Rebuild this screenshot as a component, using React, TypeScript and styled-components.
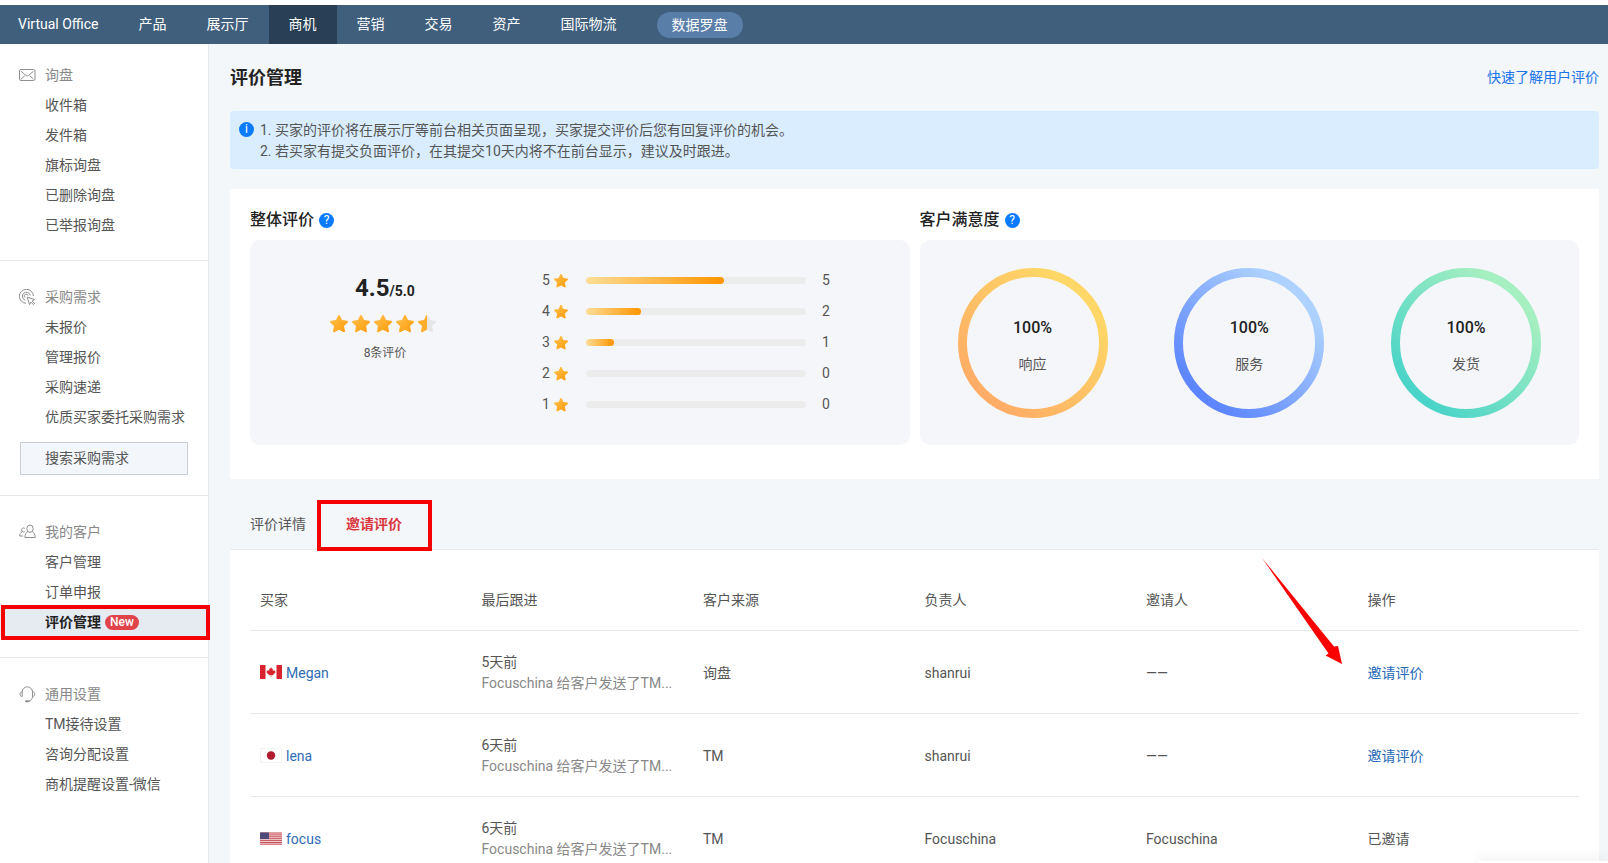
import React from 'react';
import styled, { createGlobalStyle, css } from 'styled-components';

const GlobalStyle = createGlobalStyle`
  *, *::before, *::after { box-sizing: border-box; }
  body {
    margin: 0;
    background: #fff;
    color: #555;
    font: 14px/21px Roboto, "Noto Sans CJK SC", sans-serif;
  }
  a { color: inherit; text-decoration: none; }
  button { font: inherit; color: inherit; border: 0; background: none; padding: 0; cursor: pointer; }
  h1, h2, p, ol, ul { margin: 0; padding: 0; }
  ul, ol { list-style: none; }
  svg { display: block; flex: none; }
`;

const Shell = styled.div`
  height: 100vh;
  display: flex;
  flex-direction: column;
  overflow: hidden;
  padding-top: 5px;
`;

/* ---------- top navigation ---------- */

const TopNav = styled.nav`
  flex: none;
  display: flex;
  align-items: center;
  height: 39px;
  background: #405f7d;
  color: #fff;
`;

const NavItem = styled.a<{ $active?: boolean }>`
  padding: 0 20px;
  line-height: 39px;
  &:first-child { padding-left: 18px; }
  ${p => p.$active && css`background: #283f56;`}
`;

const NavPill = styled.a`
  margin-left: 20px;
  padding: 0 15px;
  line-height: 26px;
  border-radius: 13px;
  background: #597ea8;
`;

/* ---------- side bar ---------- */

const Body = styled.div`
  flex: 1;
  display: flex;
  min-height: 0;
`;

const Sidebar = styled.aside`
  flex: none;
  width: 209px;
  border-right: 1px solid #e4e9ee;
  background: #fff;
`;

const SideSection = styled.section`
  padding: 21px 0 20px;
  border-bottom: 1px solid #e5e8eb;
  &:first-child { padding-top: 16px; }
  &:last-child { border-bottom: 0; }
`;

const SideTitle = styled.h2`
  display: flex;
  align-items: center;
  gap: 9px;
  height: 30px;
  padding-left: 19px;
  font-size: 14px;
  font-weight: 400;
  color: #888;
`;

const SideLink = styled.a<{ $active?: boolean }>`
  position: relative;
  display: flex;
  align-items: center;
  gap: 4px;
  height: 30px;
  padding-left: 45px;
  color: #555;
  ${p => p.$active && css`
    background: #e6ebf1;
    color: #222;
    font-weight: 700;
  `}
`;

const SideMark = styled.span`
  position: absolute;
  inset: -2px -2px -3px 1px;
  border: 4px solid #f40000;
  z-index: 2;
`;

const NewBadge = styled.span`
  padding: 0 5px;
  border-radius: 8px;
  background: #e0434a;
  color: #fff;
  font-size: 12px;
  font-weight: 500;
  line-height: 15px;
`;

const SearchButton = styled.button`
  display: block;
  width: 168px;
  height: 33px;
  margin: 10px 0 0 20px;
  padding-left: 24px;
  border: 1px solid #c9ced6;
  background: #f3f7fb;
  text-align: left;
`;

/* ---------- main column ---------- */

const Main = styled.main`
  flex: 1;
  display: flex;
  flex-direction: column;
  min-width: 0;
  overflow: hidden;
  padding: 0 9px 0 21px;
  background: #f3f7fa;
`;

const PageHead = styled.header`
  flex: none;
  display: flex;
  align-items: center;
  justify-content: space-between;
  height: 67px;
`;

const PageTitle = styled.h1`
  color: #222;
  font-size: 18px;
  font-weight: 700;
  line-height: 24px;
`;

const HelpLink = styled.a`
  color: #1a73e8;
`;

const Notice = styled.div`
  flex: none;
  display: flex;
  gap: 6px;
  padding: 9px 9px 7px;
  border-radius: 4px;
  background: #d9edff;
`;

const RoundMark = styled.span`
  flex: none;
  width: 15px;
  height: 15px;
  margin-top: 2px;
  border-radius: 50%;
  background: #0a7bff;
  color: #fff;
  font-size: 12px;
  font-weight: 400;
  line-height: 15px;
  text-align: center;
`;

const Summary = styled.section`
  flex: none;
  display: grid;
  grid-template-columns: 1fr 1fr;
  gap: 10px;
  margin-top: 20px;
  padding: 20px 20px 34px;
  background: #fff;
`;

const PanelTitle = styled.h2`
  display: flex;
  align-items: center;
  gap: 5px;
  height: 20px;
  margin-bottom: 11px;
  color: #222;
  font-size: 16px;
  font-weight: 500;
`;

const Panel = styled.div`
  display: flex;
  align-items: center;
  height: 205px;
  border-radius: 10px;
  background: #f5f6fa;
`;

const Score = styled.div`
  flex: none;
  width: 270px;
  display: flex;
  flex-direction: column;
  align-items: center;
  padding-bottom: 50px;
`;

const ScoreValue = styled.p`
  color: #222;
  font-size: 14px;
  font-weight: 700;
  line-height: 30px;
`;

const ScoreBig = styled.span`
  font-size: 24px;
`;

const StarRow = styled.div`
  display: flex;
  gap: 4px;
  padding: 9px 4px 10px 0;
`;

const ScoreNote = styled.p`
  font-size: 12px;
  line-height: 20px;
`;

const Bars = styled.ul`
  display: grid;
  gap: 10px;
  padding-left: 22px;
`;

const BarRow = styled.li`
  display: flex;
  align-items: center;
`;

const BarLabel = styled.span`
  display: flex;
  align-items: center;
  gap: 4px;
  width: 44px;
`;

const Track = styled.span`
  width: 220px;
  height: 7px;
  margin-right: 16px;
  border-radius: 4px;
  background: #ececec;
  overflow: hidden;
`;

const Fill = styled.span`
  display: block;
  height: 7px;
  border-radius: 4px;
  background: linear-gradient(90deg, #ffdd95, #ff9500);
`;

const Rings = styled(Panel)`
  justify-content: space-between;
  padding: 0 38px;
`;

const RingBox = styled.div`
  position: relative;
  width: 150px;
  height: 150px;
  display: flex;
  flex-direction: column;
  align-items: center;
  justify-content: center;
  gap: 16px;
  padding-top: 6px;
`;

const RingArt = styled.svg`
  position: absolute;
  inset: 0;
`;

const RingValue = styled.span`
  color: #222;
  font-size: 16px;
  font-weight: 500;
`;

/* ---------- tabs and table ---------- */

const Tabs = styled.div`
  flex: none;
  display: flex;
  height: 71px;
  border-bottom: 1px solid #e6eaee;
`;

const Tab = styled.button<{ $active?: boolean }>`
  position: relative;
  display: flex;
  align-items: center;
  height: 70px;
  padding: 20px 20px 0;
  ${p => p.$active && css`
    color: #d9363e;
    font-weight: 700;
  `}
`;

const TabMark = styled.span`
  position: absolute;
  inset: 21px -10px -2px -9px;
  border: 4px solid #f40000;
  z-index: 2;
`;

const TableCard = styled.section`
  position: relative;
  flex: none;
  padding: 20px 20px 0;
  background: #fff;
`;

const Table = styled.table`
  width: 100%;
  table-layout: fixed;
  border-collapse: separate;
  border-spacing: 0;
`;

const HeadCell = styled.th`
  height: 61px;
  padding: 0 10px;
  border-bottom: 1px solid #e8e8e8;
  font-weight: 400;
  text-align: left;
`;

const Cell = styled.td`
  height: 83px;
  padding: 21px 10px 19px;
  border-bottom: 1px solid #e8e8e8;
`;

const Buyer = styled.a`
  display: flex;
  align-items: center;
  gap: 4px;
  color: #2f6cb5;
`;

const ActionButton = styled.button`
  color: #2468b8;
`;

const FollowUp = styled.p`
  white-space: nowrap;
  color: #888;
`;

const Arrow = styled.svg`
  position: absolute;
  top: 8px;
  right: 257px;
`;

const Dock = styled.div`
  position: fixed;
  right: 0;
  bottom: 0;
  width: 130px;
  height: 2px;
  border-top-left-radius: 4px;
  background: #fff;
  box-shadow: 0 0 12px rgba(0, 0, 0, 0.25);
`;

/* ---------- drawings ---------- */

const iconProps = { width: 17, height: 17, viewBox: '0 0 17 17', fill: 'none', stroke: '#8f8f8f', 'aria-hidden': true } as const;

const MailIcon = () => (
  <svg {...iconProps}>
    <rect x="0.5" y="2.5" width="15.5" height="11" rx="1.5" />
    <path d="M2 4.200 7 8.500Q8.200 9.500 9.500 8.500L14.500 4.200M2 12.200 5.800 8.800M14.500 12.200l-3.800-3.400" />
  </svg>
);

const TargetIcon = () => (
  <svg {...iconProps}>
    <path d="M7 14.300A7 7 0 1 1 14.400 7M6.200 11.100A4 4 0 1 1 11.300 6.400M6 8.600A1.900 1.900 0 1 1 9 6.600" />
    <path d="m8.300 8.200 7.200 2.300-2.400 1.500 2.500 2.400-1.200 1.200-2.500-2.500-1.400 2.500z" strokeLinejoin="round" />
  </svg>
);

const PeopleIcon = () => (
  <svg {...iconProps}>
    <ellipse cx="11" cy="4.700" rx="3.200" ry="3.700" />
    <path d="M8.800 7.600C7 8.600 5.900 10.300 5.900 13.500h10.300c0-3.200-1.100-4.900-2.900-5.900" />
    <path d="M5.800 4.300a2 2 0 1 0-.2 3.300M3 7.800C1.500 8.600.700 9.800.700 12h3.500" />
  </svg>
);

const HeadsetIcon = () => (
  <svg {...iconProps}>
    <path d="M3.200 10.500V6a5.100 5.100 0 0 1 10.300 0v4.500c0 2.300-1.500 4.300-4 4.800" />
    <path d="M3.200 5.800C1.600 6 1 6.800 1 8.200s.7 2.200 2.200 2.400M13.500 5.800c1.600.2 2.200 1 2.200 2.400s-.7 2.200-2.200 2.400" />
    <path d="M7 15.300h2.500" strokeWidth="2" strokeLinecap="round" />
  </svg>
);

const STAR = 'M10 1.200c.5 0 .8.300 1 .7l2 4.300 4.800.6c1 .2 1.300 1.200.6 1.900l-3.500 3.300.9 4.800c.2 1-.7 1.600-1.500 1.100L10 15.600l-4.300 2.300c-.8.5-1.700-.1-1.500-1.100l.9-4.800L1.600 8.700C.9 8 1.200 7 2.200 6.800L7 6.200l2-4.300c.2-.4.500-.7 1-.7Z';

const Star = ({ size, half }: { size: number; half?: boolean }) => (
  <svg width={size} height={size} viewBox="1.200 1.200 17.600 17.600" aria-hidden>
    <defs>
      <linearGradient id="starFill" x1="0" y1="0" x2="1" y2="1">
        <stop offset="0" stopColor="#ffc24d" />
        <stop offset="1" stopColor="#ff9a0a" />
      </linearGradient>
      <linearGradient id="starHalf">
        <stop offset="0.5" stopColor="#ffad2b" />
        <stop offset="0.5" stopColor="#e6e6e6" />
      </linearGradient>
    </defs>
    <path d={STAR} fill={half ? 'url(#starHalf)' : 'url(#starFill)'} />
  </svg>
);

const Flag = ({ country }: { country: string }) => (
  <svg width="22" height="16" viewBox="0 0 22 16" role="img" aria-label={country}>
    {country === 'Canada' && (
      <>
        <path d="M0 0h22v14H0z" fill="#fff" />
        <path d="M0 0h5.500v14H0zM16.500 0H22v14h-5.500z" fill="#d8232f" />
        <path d="m11 2 1 1.900 1-.5-.4 2.600L14 4.900l.3.900 1.200-.1-.5 1.300.6.400-2.400 2 .2.900-2.100-.3V12h-.6v-2l-2.100.3.200-.9-2.400-2L7 7l-.5-1.300 1.200.1.300-.9L9.400 6 9 3.400l1 .5z" fill="#d8232f" />
      </>
    )}
    {country === 'Japan' && (
      <>
        <path d="M.5.500h21v14H.5z" fill="#fff" stroke="#f3f3f3" />
        <circle cx="11" cy="7.500" r="4.200" fill="#b01c2e" />
      </>
    )}
    {country === 'United States' && (
      <>
        <path d="M0 1.500h22v12H0z" fill="#f4dcdc" />
        <path d="M0 2h22M0 3.900h22M0 5.800h22M0 7.700h22M0 9.600h22M0 11.500h22M0 13.200h22" stroke="#c8505a" />
        <path d="M0 1.500h9V8H0z" fill="#4b4a78" />
      </>
    )}
  </svg>
);

const Ring = ({ id, from, to, label }: { id: string; from: string; to: string; label: string }) => (
  <RingBox>
    <RingArt width="150" height="150" viewBox="0 0 150 150" aria-hidden>
      <defs>
        <linearGradient id={id} x1="0.2" y1="0.9" x2="0.85" y2="0.2">
          <stop offset="0" stopColor={from} />
          <stop offset="1" stopColor={to} />
        </linearGradient>
      </defs>
      <circle cx="75" cy="75" r="70.500" fill="none" stroke={`url(#${id})`} strokeWidth="9" />
    </RingArt>
    <RingValue>100%</RingValue>
    <span>{label}</span>
  </RingBox>
);

/* ---------- data ---------- */

const NAV = ['Virtual Office', '产品', '展示厅', '商机', '营销', '交易', '资产', '国际物流'];

const SECTIONS = [
  { title: '询盘', icon: <MailIcon />, links: ['收件箱', '发件箱', '旗标询盘', '已删除询盘', '已举报询盘'] },
  { title: '采购需求', icon: <TargetIcon />, links: ['未报价', '管理报价', '采购速递', '优质买家委托采购需求'], search: '搜索采购需求' },
  { title: '我的客户', icon: <PeopleIcon />, links: ['客户管理', '订单申报', '评价管理'] },
  { title: '通用设置', icon: <HeadsetIcon />, links: ['TM接待设置', '咨询分配设置', '商机提醒设置-微信'] },
];

const RATINGS = [
  { stars: 5, count: 5 },
  { stars: 4, count: 2 },
  { stars: 3, count: 1 },
  { stars: 2, count: 0 },
  { stars: 1, count: 0 },
];
const TOTAL = 8;

const COLUMNS = ['买家', '最后跟进', '客户来源', '负责人', '邀请人', '操作'];

const BUYERS = [
  { name: 'Megan', country: 'Canada', when: '5天前', source: '询盘', owner: 'shanrui', inviter: '', invited: false },
  { name: 'lena', country: 'Japan', when: '6天前', source: 'TM', owner: 'shanrui', inviter: '', invited: false },
  { name: 'focus', country: 'United States', when: '6天前', source: 'TM', owner: 'Focuschina', inviter: 'Focuschina', invited: true },
];

export default function App() {
  return (
    <Shell>
      <GlobalStyle />
      <TopNav>
        {NAV.map(item => (
          <NavItem key={item} href="#" $active={item === '商机'}>{item}</NavItem>
        ))}
        <NavPill href="#">数据罗盘</NavPill>
      </TopNav>

      <Body>
        <Sidebar>
          {SECTIONS.map(section => (
            <SideSection key={section.title}>
              <SideTitle>{section.icon}{section.title}</SideTitle>
              {section.links.map(link => {
                const active = link === '评价管理';
                return (
                  <SideLink key={link} href="#" $active={active}>
                    {link}
                    {active && <NewBadge>New</NewBadge>}
                    {active && <SideMark />}
                  </SideLink>
                );
              })}
              {section.search && <SearchButton>{section.search}</SearchButton>}
            </SideSection>
          ))}
        </Sidebar>

        <Main>
          <PageHead>
            <PageTitle>评价管理</PageTitle>
            <HelpLink href="#">快速了解用户评价</HelpLink>
          </PageHead>

          <Notice>
            <RoundMark>i</RoundMark>
            <div>
              <p>1. 买家的评价将在展示厅等前台相关页面呈现，买家提交评价后您有回复评价的机会。</p>
              <p>2. 若买家有提交负面评价，在其提交10天内将不在前台显示，建议及时跟进。</p>
            </div>
          </Notice>

          <Summary>
            <div>
              <PanelTitle>整体评价<RoundMark>?</RoundMark></PanelTitle>
              <Panel>
                <Score>
                  <ScoreValue><ScoreBig>4.5</ScoreBig>/5.0</ScoreValue>
                  <StarRow>
                    {[1, 2, 3, 4, 5].map(n => <Star key={n} size={18} half={n === 5} />)}
                  </StarRow>
                  <ScoreNote>8条评价</ScoreNote>
                </Score>
                <Bars>
                  {RATINGS.map(r => (
                    <BarRow key={r.stars}>
                      <BarLabel>{r.stars}<Star size={14} /></BarLabel>
                      <Track><Fill style={{ width: `${(r.count / TOTAL) * 100}%` }} /></Track>
                      <span>{r.count}</span>
                    </BarRow>
                  ))}
                </Bars>
              </Panel>
            </div>
            <div>
              <PanelTitle>客户满意度<RoundMark>?</RoundMark></PanelTitle>
              <Rings>
                <Ring id="ringReply" from="#ffad66" to="#ffd766" label="响应" />
                <Ring id="ringService" from="#5c85ff" to="#aed2ff" label="服务" />
                <Ring id="ringShip" from="#4ad4c8" to="#a6efc0" label="发货" />
              </Rings>
            </div>
          </Summary>

          <Tabs>
            <Tab>评价详情</Tab>
            <Tab $active>邀请评价<TabMark /></Tab>
          </Tabs>

          <TableCard>
            <Table>
              <thead>
                <tr>{COLUMNS.map(c => <HeadCell key={c} scope="col">{c}</HeadCell>)}</tr>
              </thead>
              <tbody>
                {BUYERS.map(b => (
                  <tr key={b.name}>
                    <Cell><Buyer href="#"><Flag country={b.country} />{b.name}</Buyer></Cell>
                    <Cell>
                      <p>{b.when}</p>
                      <FollowUp>Focuschina 给客户发送了TM...</FollowUp>
                    </Cell>
                    <Cell>{b.source}</Cell>
                    <Cell>{b.owner}</Cell>
                    <Cell>{b.inviter || '——'}</Cell>
                    <Cell>{b.invited ? '已邀请' : <ActionButton>邀请评价</ActionButton>}</Cell>
                  </tr>
                ))}
              </tbody>
            </Table>
            <Arrow width="80" height="106" viewBox="0 0 80 106" aria-hidden>
              <path d="M0 0 72 88.500 76 88 80 106 63.500 97.500 66.500 95.500Z" fill="#fb0000" />
            </Arrow>
          </TableCard>
        </Main>
      </Body>
      <Dock />
    </Shell>
  );
}
